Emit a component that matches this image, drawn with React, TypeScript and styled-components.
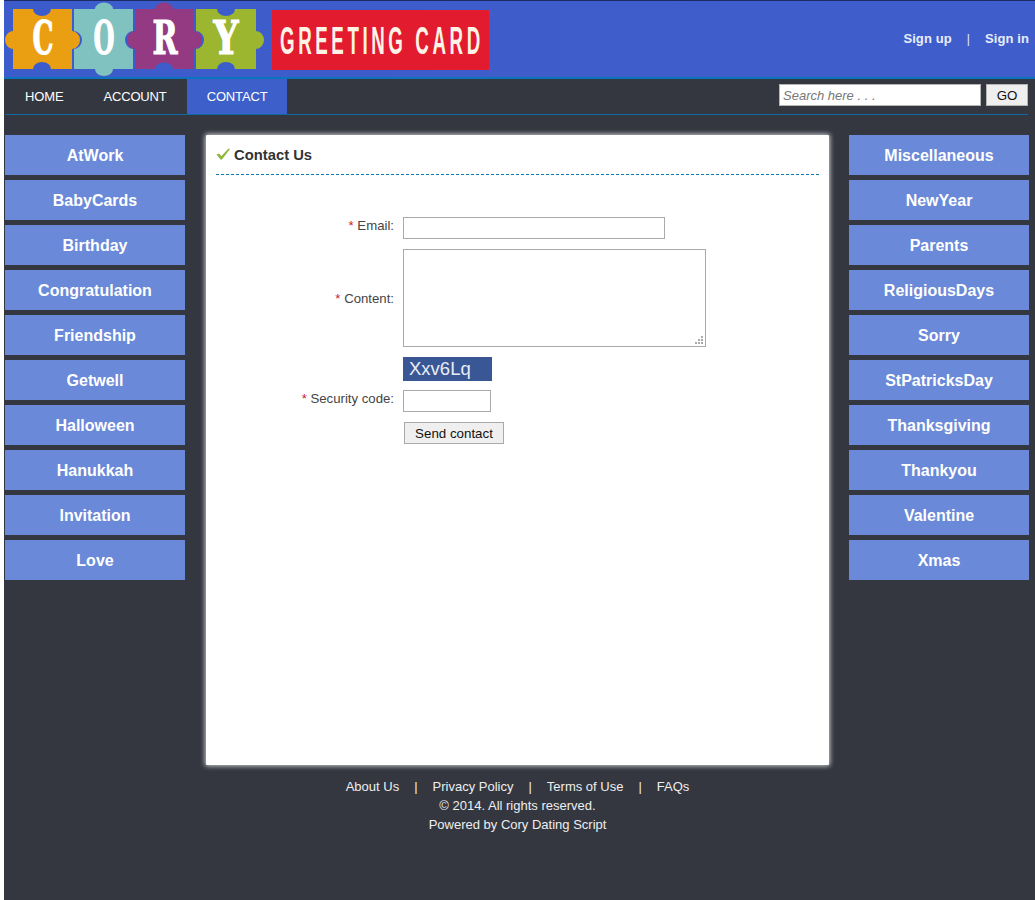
import React from 'react';
import styled, { createGlobalStyle } from 'styled-components';

const leftCategories = ['AtWork', 'BabyCards', 'Birthday', 'Congratulation', 'Friendship', 'Getwell', 'Halloween', 'Hanukkah', 'Invitation', 'Love'];
const rightCategories = ['Miscellaneous', 'NewYear', 'Parents', 'ReligiousDays', 'Sorry', 'StPatricksDay', 'Thanksgiving', 'Thankyou', 'Valentine', 'Xmas'];
const footerLinks = ['About Us', 'Privacy Policy', 'Terms of Use', 'FAQs'];

const GlobalStyle = createGlobalStyle`
  html, body {
    margin: 0;
    padding: 0;
    background: #fff;
    font-family: "Liberation Sans", Arial, sans-serif;
  }
  a { text-decoration: none; color: inherit; }
`;

const Wrapper = styled.div`
  margin-left: 4px;
  height: 900px;
  overflow: hidden;
  background: #343740;
`;

const Header = styled.header`
  height: 76px;
  border-top: 1px solid #1c2a66;
  border-bottom: 2px solid #0b74bd;
  background: linear-gradient(90deg, #3d5ccb, #3f5ecb);
  display: flex;
  align-items: center;
  justify-content: space-between;
  padding-right: 6px;
`;

const Logo = styled.svg`
  display: block;
  width: 490px;
  height: 76px;
  margin-left: -4px;
`;

const UserLinks = styled.div`
  display: flex;
  gap: 15px;
  color: #e8edfb;
  font-size: 13px;
  font-weight: bold;
  letter-spacing: 0.1px;
`;

const Divider = styled.span`
  font-weight: normal;
  font-size: 12px;
  line-height: 16px;
`;

const NavBar = styled.nav`
  height: 35px;
  margin: 0 7px 0 1px;
  border-bottom: 1px solid #0b6a9f;
  display: flex;
  justify-content: space-between;
`;

const NavList = styled.div`
  display: flex;
`;

const NavItem = styled.a<{ $active?: boolean }>`
  padding: 0 20px;
  line-height: 36px;
  height: 35px;
  font-size: 13px;
  letter-spacing: -0.15px;
  color: #fff;
  background: ${p => (p.$active ? '#3d5fc9' : 'transparent')};
`;

const SearchForm = styled.form`
  display: flex;
  gap: 5px;
  padding-top: 5px;
`;

const SearchInput = styled.input`
  box-sizing: border-box;
  width: 202px;
  height: 22px;
  padding: 0 3px;
  border: 1px solid #b5b5b5;
  background: #fff;
  font: italic 13px "Liberation Sans", Arial, sans-serif;
  &::placeholder { color: #777; opacity: 1; }
`;

const GoButton = styled.button`
  box-sizing: border-box;
  width: 42px;
  height: 22px;
  padding: 0;
  border: 1px solid #b5b5b5;
  background: #efefef;
  color: #111;
  font: 13.333px "Liberation Sans", Arial, sans-serif;
`;

const Body = styled.div`
  display: grid;
  grid-template-columns: 180px 624px 180px;
  column-gap: 20px;
  align-items: start;
  padding: 20px 0 0 1px;
`;

const SideMenu = styled.div`
  display: flex;
  flex-direction: column;
  gap: 5px;
`;

const SideLink = styled.a`
  display: block;
  height: 40px;
  line-height: 42px;
  text-align: center;
  background: #6a89d8;
  color: #fff;
  font-size: 16px;
  font-weight: bold;
`;

const Card = styled.main`
  box-sizing: border-box;
  height: 630px;
  margin-left: 1px;
  padding: 0 10px;
  background: #fff;
  box-shadow: 0 0 5px 1px rgba(255, 255, 255, 0.75);
  border-radius: 1px;
`;

const CardTitle = styled.h1`
  display: flex;
  align-items: center;
  gap: 4px;
  height: 39px;
  margin: 0;
  border-bottom: 1px dashed #0b7ab0;
  color: #333;
  font-size: 14.8px;
  font-weight: bold;
`;

const Check = styled.svg`
  width: 14px;
  height: 12px;
  margin-top: -1px;
`;

const ContactForm = styled.form`
  display: grid;
  grid-template-columns: 178px 1fr;
  column-gap: 9px;
  row-gap: 10px;
  align-items: center;
  padding-top: 42px;
  color: #444;
  font-size: 13.2px;
`;

const FieldLabel = styled.label<{ $offset?: number }>`
  text-align: right;
  margin-top: ${p => p.$offset ?? 0}px;
`;

const Star = styled.span`
  color: #c8202a;
`;

const TextField = styled.input<{ $width: number }>`
  box-sizing: border-box;
  display: block;
  width: ${p => p.$width}px;
  height: 22px;
  border: 1px solid #aaa;
  background: #fff;
`;

const TextAreaWrap = styled.div`
  position: relative;
  width: 303px;
  height: 98px;
`;

const TextArea = styled.textarea`
  box-sizing: border-box;
  display: block;
  width: 303px;
  height: 98px;
  margin: 0;
  border: 1px solid #aaa;
  background: #fff;
  resize: none;
`;

const ResizeGrip = styled.svg`
  position: absolute;
  right: 2px;
  bottom: 2px;
  width: 9px;
  height: 9px;
`;

const Captcha = styled.div`
  grid-column: 2;
  box-sizing: border-box;
  width: 89px;
  height: 24px;
  margin-bottom: -1px;
  padding-left: 6px;
  background: #3a5795;
  color: #e8edf8;
  font-size: 18.5px;
  line-height: 24px;
`;

const SendButton = styled.button`
  grid-column: 2;
  justify-self: start;
  box-sizing: border-box;
  width: 100px;
  height: 22px;
  margin-left: 1px;
  padding: 0;
  border: 1px solid #aaa;
  background: #efefef;
  color: #111;
  font: 13.333px "Liberation Sans", Arial, sans-serif;
`;

const Footer = styled.footer`
  margin-left: 202px;
  width: 623px;
  padding-top: 12px;
  color: #eee;
  font-size: 13px;
  line-height: 19px;
  text-align: center;
`;

const FooterLinks = styled.div`
  display: flex;
  justify-content: center;
  gap: 15px;
`;

const piece = (fill: string, d: string) => <path d={d} fill={fill} />;

const LogoArt = () => (
  <Logo viewBox="0 0 490 76">
    {piece('#ea9f12', 'M13 8h20a9 7 0 0 0 18 0h21v22a8 9 0 0 1 0 18v20H51a9 7 0 0 0-18 0H13V48a8 9 0 0 1 0-18z')}
    {piece('#7fc2bf', 'M74 8h21a9 6.5 0 0 1 18 0h20v22a8 9 0 0 0 0 18v20h-20a9 7 0 0 1-18 0H74V48a8 9 0 0 0 0-18z')}
    {piece('#933a82', 'M135 8h20a9 6.5 0 0 1 18 0h21v22a8 9 0 0 1 0 18v20h-21a9 6.5 0 0 0-18 0h-20V48a8 9 0 0 1 0-18z')}
    {piece('#9db62f', 'M196 8h21a9 7 0 0 0 18 0h21v22a8 9 0 0 1 0 18v20h-21a9 7 0 0 0-18 0h-21V48a8 9 0 0 0 0-18z')}
    <g fill="#fff" stroke="#fff" strokeWidth="1.2" fontFamily='"DejaVu Serif", serif' fontWeight="bold" fontSize="46" textAnchor="middle">
      <text x="43" y="53" textLength="21" lengthAdjust="spacingAndGlyphs">C</text>
      <text x="104" y="53" textLength="21" lengthAdjust="spacingAndGlyphs">O</text>
      <text x="165" y="53" textLength="25" lengthAdjust="spacingAndGlyphs">R</text>
      <text x="226" y="53" textLength="25" lengthAdjust="spacingAndGlyphs">Y</text>
    </g>
    <rect x="272" y="9" width="217" height="60" fill="#e31b2f" />
    <text
      transform="translate(280 52.5) scale(0.48 1)"
      fill="#fdf3e6"
      fontFamily='"Liberation Sans", sans-serif'
      fontWeight="bold"
      fontSize="39"
      textLength="417"
      lengthAdjust="spacing"
    >
      GREETING CARD
    </text>
  </Logo>
);

export default function App() {
  return (
    <>
      <GlobalStyle />
      <Wrapper>
        <Header>
          <LogoArt />
          <UserLinks>
            <a href="#signup">Sign up</a>
            <Divider>|</Divider>
            <a href="#signin">Sign in</a>
          </UserLinks>
        </Header>
        <NavBar>
          <NavList>
            <NavItem href="#home">HOME</NavItem>
            <NavItem href="#account">ACCOUNT</NavItem>
            <NavItem href="#contact" $active>CONTACT</NavItem>
          </NavList>
          <SearchForm>
            <SearchInput placeholder="Search here . . ." />
            <GoButton type="button">GO</GoButton>
          </SearchForm>
        </NavBar>
        <Body>
          <SideMenu>
            {leftCategories.map(c => <SideLink key={c} href="#cat">{c}</SideLink>)}
          </SideMenu>
          <Card>
            <CardTitle>
              <Check viewBox="0 0 14 12">
                <path d="M0.5 6.5 L3 5.5 L5.5 8 L12.5 0.5 L14 1 L6 11.5 L4.5 11.5z" fill="#8fb83e" />
              </Check>
              Contact Us
            </CardTitle>
            <ContactForm>
              <FieldLabel $offset={-6}><Star>*</Star> Email:</FieldLabel>
              <TextField $width={262} />
              <FieldLabel><Star>*</Star> Content:</FieldLabel>
              <TextAreaWrap>
                <TextArea />
                <ResizeGrip viewBox="0 0 9 9">
                  <g fill="#aaa">
                    <rect x="6" y="0" width="2" height="2" />
                    <rect x="3" y="3" width="2" height="2" />
                    <rect x="6" y="3" width="2" height="2" />
                    <rect x="0" y="6" width="2" height="2" />
                    <rect x="3" y="6" width="2" height="2" />
                    <rect x="6" y="6" width="2" height="2" />
                  </g>
                </ResizeGrip>
              </TextAreaWrap>
              <Captcha>Xxv6Lq</Captcha>
              <FieldLabel $offset={-6}><Star>*</Star> Security code:</FieldLabel>
              <TextField $width={88} />
              <SendButton type="button">Send contact</SendButton>
            </ContactForm>
          </Card>
          <SideMenu>
            {rightCategories.map(c => <SideLink key={c} href="#cat">{c}</SideLink>)}
          </SideMenu>
        </Body>
        <Footer>
          <FooterLinks>
            {footerLinks.map((l, i) => (
              <React.Fragment key={l}>
                {i > 0 && <span>|</span>}
                <a href="#page">{l}</a>
              </React.Fragment>
            ))}
          </FooterLinks>
          <div>© 2014. All rights reserved.</div>
          <div>Powered by Cory Dating Script</div>
        </Footer>
      </Wrapper>
    </>
  );
}
